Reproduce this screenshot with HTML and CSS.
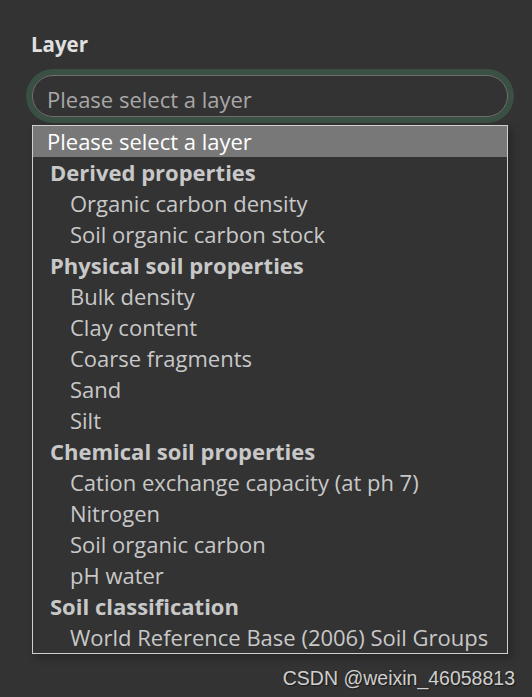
FILE: index.html
```html
<!DOCTYPE html>
<html lang="en">
<head>
  <meta charset="UTF-8" />
  <meta name="viewport" content="width=device-width, initial-scale=1.0">
  <title>Layer</title>
  <link rel="stylesheet" href="styles.css">
</head>
<body>

  <div class="panel">
    <label class="field-label">Layer</label>

    <div class="select-box">Please select a layer</div>

    <div class="dropdown">
      <div class="opt opt-active">Please select a layer</div>

      <div class="group">Derived properties</div>
      <div class="opt">Organic carbon density</div>
      <div class="opt">Soil organic carbon stock</div>

      <div class="group">Physical soil properties</div>
      <div class="opt">Bulk density</div>
      <div class="opt">Clay content</div>
      <div class="opt">Coarse fragments</div>
      <div class="opt">Sand</div>
      <div class="opt">Silt</div>

      <div class="group">Chemical soil properties</div>
      <div class="opt">Cation exchange capacity (at ph 7)</div>
      <div class="opt">Nitrogen</div>
      <div class="opt">Soil organic carbon</div>
      <div class="opt">pH water</div>

      <div class="group">Soil classification</div>
      <div class="opt">World Reference Base (2006) Soil Groups</div>
    </div>
  </div>

  <div class="watermark">CSDN @weixin_46058813</div>

</body>
</html>
```

FILE: styles.css
```css
* {
  box-sizing: border-box;
}

body {
  margin: 0;
  background: #333333;
  color: #c8c8c8;
  font-family: 'Open Sans', 'Noto Sans', sans-serif;
  min-height: 697px;
}

.panel {
  padding: 31px 24px 0 32px;
}

.field-label {
  display: block;
  margin-left: -1px;
  font-size: 20.5px;
  line-height: 27px;
  font-weight: 700;
  color: #e0e0e0;
  margin-bottom: 17px;
}

.select-box {
  width: 476px;
  height: 42px;
  border: 1px solid #707070;
  border-radius: 21px;
  box-shadow: 0 0 0 6px #3a5044;
  padding: 4px 14px 0;
  font-size: 22px;
  line-height: 38px;
  color: #a8a8a8;
}

.dropdown {
  width: 476px;
  margin-top: 8px;
  border: 1px solid #cfcfcf;
  background: #333333;
  box-shadow: 4px 4px 8px rgba(0, 0, 0, 0.25);
  font-size: 22px;
  line-height: 31px;
}

.opt {
  padding-left: 37px;
  color: #c8c8c8;
  white-space: nowrap;
}

.opt-active {
  padding-left: 14px;
  background: #787878;
  color: #ffffff;
}

.group {
  padding-left: 17px;
  font-weight: 700;
  color: #c8c8c8;
}

.watermark {
  text-align: right;
  padding-right: 17px;
  margin-top: 13px;
  font-family: 'Liberation Sans', Arial, sans-serif;
  font-size: 19.5px;
  line-height: 22px;
  color: #cfcfcf;
  text-shadow: 1px 1px 1px rgba(0, 0, 0, 0.5);
}
```
